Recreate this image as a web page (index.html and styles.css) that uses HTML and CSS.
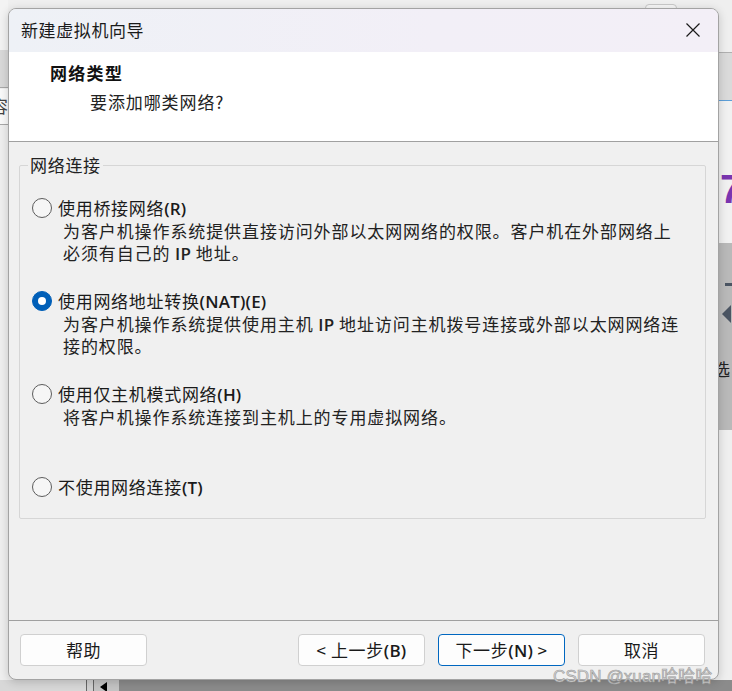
FILE: index.html
```html
<!DOCTYPE html>
<html lang="zh-CN">
<head>
<meta charset="utf-8">
<title>新建虚拟机向导</title>
<link rel="stylesheet" href="styles.css">
</head>
<body>
<div class="desktop">
  <div class="bg bg-left-top"></div>
  <div class="bg bg-left-band"></div>
  <div class="bg bg-left-row"><span class="bg-glyph">容</span></div>
  <div class="bg bg-right-band"></div>
  <div class="bg bg-right-row"><span class="bg-seven">7</span></div>
  <div class="bg bg-right-gray"><span class="bg-arrow"></span><span class="bg-char">选</span></div>
  <div class="bg bg-bottom-light"></div>
  <div class="bg bg-bottom-lines"></div>
  <div class="bg bg-bottom-tri"></div>
  <div class="bg bg-bottom-dark"></div>
  <div class="bg bg-top-btn"></div>

  <div class="dialog">
    <div class="titlebar">
      <span class="title">新建虚拟机向导</span>
      <span class="close">
        <svg width="16" height="16" viewBox="0 0 16 16"><path d="M1.5 1.5 L14.5 14.5 M14.5 1.5 L1.5 14.5" stroke="#1a1a1a" stroke-width="1.2" fill="none"/></svg>
      </span>
    </div>
    <div class="header">
      <div class="h-title">网络类型</div>
      <div class="h-sub">要添加哪类网络?</div>
    </div>
    <div class="body">
      <div class="group">
        <span class="legend">网络连接</span>
        <div class="option">
          <div class="opt-row"><span class="radio"></span><span class="label">使用桥接网络<span class="lat">(R)</span></span></div>
          <div class="desc">为客户机操作系统提供直接访问外部以太网网络的权限。客户机在外部网络上<br>必须有自己的 <span class="lat">IP</span> 地址。</div>
        </div>
        <div class="option">
          <div class="opt-row"><span class="radio checked"></span><span class="label">使用网络地址转换<span class="lat">(NAT)(E)</span></span></div>
          <div class="desc">为客户机操作系统提供使用主机 <span class="lat">IP</span> 地址访问主机拨号连接或外部以太网网络连<br>接的权限。</div>
        </div>
        <div class="option">
          <div class="opt-row"><span class="radio"></span><span class="label">使用仅主机模式网络<span class="lat">(H)</span></span></div>
          <div class="desc">将客户机操作系统连接到主机上的专用虚拟网络。</div>
        </div>
        <div class="option">
          <div class="opt-row"><span class="radio"></span><span class="label">不使用网络连接<span class="lat">(T)</span></span></div>
        </div>
      </div>
    </div>
    <div class="footer">
      <button class="btn">帮助</button>
      <span class="spacer"></span>
      <button class="btn">&lt; 上一步<span class="lat">(B)</span></button>
      <button class="btn primary">下一步<span class="lat">(N)</span> &gt;</button>
      <button class="btn">取消</button>
    </div>
  </div>

  <div class="watermark">CSDN @xuan哈哈哈</div>
</div>
</body>
</html>
```
FILE: styles.css
```css
* { box-sizing: border-box; }
html, body { margin: 0; padding: 0; }
body {
  width: 732px;
  height: 691px;
  overflow: hidden;
  font-family: "Noto Sans CJK SC", "Microsoft YaHei", sans-serif;
  color: #1a1a1a;
  background: #ececec;
}
.desktop {
  position: relative;
  width: 732px;
  height: 691px;
  padding: 8px;
  background: #efefef;
}

/* background window fragments */
.bg { position: absolute; }
.bg-left-top { left: 0; top: 0; width: 8px; height: 50px; background: #f3f3f3; }
.bg-left-band { left: 0; top: 50px; width: 8px; height: 38px; background: #d9d9d9; border-bottom: 1px solid #a8a8a8; }
.bg-left-row { left: 0; top: 89px; width: 8px; height: 36px; background: #fafafa; border-bottom: 1px solid #a8a8a8; overflow: hidden; }
.bg-glyph { position: absolute; left: -9px; top: 4px; font-size: 17px; color: #444; }
.bg-right-band { left: 719px; top: 52px; width: 13px; height: 49px; background: #dadada; border-top: 1px solid #b0b0b0; border-bottom: 1px solid #5d9fd8; }
.bg-right-row { left: 719px; top: 101px; width: 13px; height: 142px; background: #f1f1f1; overflow: hidden; }
.bg-seven { position: absolute; left: 1px; top: 66px; font-family: "Liberation Sans", sans-serif; font-size: 40px; line-height: 44px; font-weight: bold; color: #7a35b0; }
.bg-right-gray { left: 719px; top: 243px; width: 13px; height: 187px; background: #b9b9b9; overflow: hidden; }
.bg-arrow { position: absolute; left: 3px; top: 62px; width: 0; height: 0; border-top: 9px solid transparent; border-bottom: 9px solid transparent; border-right: 9px solid #4b5563; }
.bg-arrow::before { content: ""; position: absolute; left: 3px; top: -31px; width: 10px; height: 3px; background: #4b5563; }
.bg-char { position: absolute; left: -6px; top: 113px; font-size: 17px; color: #222; }
.bg-bottom-light { left: 0; top: 680px; width: 86px; height: 11px; background: #d8d8d8; }
.bg-bottom-lines { left: 86px; top: 680px; width: 8px; height: 11px; background: #d0d0d0; border-left: 1px solid #666; border-right: 1px solid #666; }
.bg-bottom-tri { left: 94px; top: 680px; width: 25px; height: 11px; background: #c4c4c4; }
.bg-bottom-tri::after { content: ""; position: absolute; left: 6px; top: 2px; border-top: 5px solid transparent; border-bottom: 5px solid transparent; border-right: 7px solid #000; }
.bg-bottom-dark { left: 119px; top: 680px; width: 613px; height: 11px; background: #8b8b8b; }
.bg-top-btn { left: 645px; top: 4px; width: 32px; height: 10px; border: 1px solid #c8c8c8; border-radius: 4px; background: #f6f6f6; }

/* dialog window */
.dialog {
  position: relative;
  z-index: 1;
  width: 711px;
  height: 672px;
  border: 1px solid #a3a3a3;
  border-radius: 8px;
  overflow: hidden;
  background: #f0f0f0;
  box-shadow: 0 2px 10px rgba(0,0,0,0.18);
  display: flex;
  flex-direction: column;
}
.titlebar {
  height: 43px;
  flex: none;
  display: flex;
  align-items: center;
  justify-content: space-between;
  padding: 0 40px 2px 12px;
  background: linear-gradient(90deg, #eef1f6 0%, #f2eff7 60%, #f3eff7 100%);
}
.title { font-size: 17px; letter-spacing: 0.6px; color: #1a1a1a; }
.close { width: 16px; height: 16px; margin-right: -23px; display: flex; }

.lat { font-family: "Open Sans", "Noto Sans", sans-serif; font-weight: 600; letter-spacing: 0.2px; line-height: 1; }

.header {
  height: 90px;
  flex: none;
  background: #ffffff;
  border-bottom: 1px solid #a0a0a0;
  padding: 10px 0 0 41px;
}
.h-title { font-size: 17px; font-weight: bold; letter-spacing: 1.3px; line-height: 22px; color: #111; }
.h-sub { font-size: 17px; letter-spacing: 0.9px; line-height: 22px; margin: 7px 0 0 40px; color: #222; }

.body {
  height: 479px;
  flex: none;
  border-bottom: 1px solid #a0a0a0;
  padding: 23px 12px 0 10px;
}
.group {
  position: relative;
  height: 354px;
  border: 1px solid #d6d6d6;
  border-radius: 2px;
  padding: 31px 0 0 12px;
}
.legend {
  position: absolute;
  left: 8px;
  top: -12px;
  padding: 0 2px;
  background: #f0f0f0;
  font-size: 17px;
  line-height: 22px;
  letter-spacing: 0.7px;
  color: #222;
}
.option { height: 93px; }
.opt-row { display: flex; align-items: center; height: 22px; }
.radio {
  width: 20px;
  height: 20px;
  border-radius: 50%;
  border: 1px solid #5c5c5c;
  background: #f6f6f6;
  flex: none;
  margin-right: 6px;
  position: relative;
}
.radio.checked { background: #005fb8; border-color: #005fb8; }
.radio.checked::after {
  content: "";
  position: absolute;
  left: 5px; top: 5px;
  width: 8px; height: 8px;
  border-radius: 50%;
  background: #fff;
}
.label { font-size: 17px; letter-spacing: 0.7px; line-height: 22px; color: #1a1a1a; }
.desc {
  margin: 1px 0 0 31px;
  font-size: 17px;
  letter-spacing: 0.9px;
  line-height: 22px;
  white-space: nowrap;
  color: #222;
}

.footer {
  flex: 1;
  display: flex;
  align-items: flex-start;
  gap: 13px;
  padding: 13px 13px 0 11px;
}
.spacer { flex: 1; }
.btn {
  width: 127px;
  height: 32px;
  border: 1px solid #d0d0d0;
  border-radius: 4px;
  background: #fdfdfd;
  font-family: "Noto Sans CJK SC", "Microsoft YaHei", sans-serif;
  font-size: 17px;
  letter-spacing: 0.6px;
  color: #1a1a1a;
  padding: 0;
  line-height: 30px;
}
.btn.primary { border-color: #0067c0; }

.watermark {
  position: absolute;
  z-index: 2;
  left: 553px;
  top: 665px;
  font-family: "Liberation Sans", "Noto Sans CJK SC", sans-serif;
  font-size: 17px;
  line-height: 24px;
  color: #d4d4d4;
  -webkit-text-stroke: 0.6px #9c9c9c;
  letter-spacing: 0.1px;
}
```
